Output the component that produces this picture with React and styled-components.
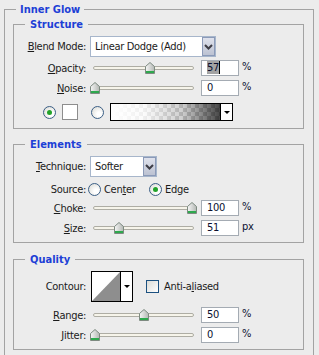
import React from 'react'
import styled, { createGlobalStyle } from 'styled-components'

const GlobalStyle = createGlobalStyle`
  body {
    margin: 0;
    background: #ececec;
    font-family: 'DejaVu Sans Condensed', 'Liberation Sans', sans-serif;
    font-size: 11px;
    letter-spacing: -0.3px;
    color: #1b1b1b;
  }
`

const Panel = styled.fieldset`
  box-sizing: border-box;
  width: 310px;
  min-inline-size: 0;
  margin: 3px 0 0 4px;
  padding: 2px 9px 8px 8px;
  border: 1px solid #a3a3a3;
`

const Legend = styled.legend`
  margin-left: ${(p) => p.$offset}px;
  padding: 0 ${(p) => p.$pad}px;
  line-height: 13px;
  font-weight: bold;
  letter-spacing: 0;
  color: #1d3fd6;
`

const Section = styled.fieldset`
  box-sizing: border-box;
  width: 291px;
  min-inline-size: 0;
  margin: ${(p) => p.$top}px 0 0;
  padding: 5px 0 ${(p) => p.$bottom}px 0;
  border: 1px solid #a3a3a3;
`

const Row = styled.div`
  display: flex;
  align-items: center;
  height: ${(p) => p.$h || 18}px;
  margin-top: ${(p) => p.$mt || 0}px;
  padding-left: ${(p) => p.$indent || 0}px;
`

const Label = styled.span`
  width: 72px;
  flex-shrink: 0;
  text-align: right;
  white-space: nowrap;
`

const Key = styled.u`
  text-decoration: underline;
`

const SelectBox = styled.div`
  box-sizing: border-box;
  width: ${(p) => p.$w}px;
  height: 21px;
  margin-left: 4px;
  display: flex;
  align-items: center;
  border: 1px solid #a7b6cb;
  background: #fff;
  padding-left: 4px;
`

const SelectText = styled.span`
  flex: 1;
  white-space: nowrap;
`

const SelectButton = styled.div`
  box-sizing: border-box;
  width: 13px;
  height: 19px;
  border: 1px solid #8b9ab8;
  background: linear-gradient(#dfe2ec, #bcc2d2);
  display: flex;
  align-items: center;
  justify-content: center;
`

const Slider = styled.div`
  position: relative;
  box-sizing: border-box;
  width: 107px;
  height: 18px;
  margin-left: 4px;
  flex-shrink: 0;
  display: flex;
  align-items: center;
  padding: 0 3px;
`

const Track = styled.div`
  flex: 1;
  height: 2px;
  border: 1px solid #aeada4;
  border-radius: 3px;
  background: #f6f4ea;
`

const Thumb = styled.svg`
  position: absolute;
  top: 3px;
`

const NumBox = styled.div`
  box-sizing: border-box;
  width: 38px;
  height: 16px;
  margin-left: 4px;
  flex-shrink: 0;
  border: 1px solid #a4abb3;
  background: #fff;
  padding-left: 5px;
  line-height: 14px;
  color: #0b1030;
`

const Selected = styled.span`
  background: #a3a3a3;
  border-right: 1px solid #000;
`

const Unit = styled.span`
  margin-left: 3px;
  margin-top: -3px;
  color: #0b1030;
`

const Radio = styled.span`
  box-sizing: border-box;
  width: 13px;
  height: 13px;
  flex-shrink: 0;
  margin-left: ${(p) => p.$ml || 0}px;
  border-radius: 50%;
  border: 1px solid #3b5f86;
  background: radial-gradient(circle at 65% 65%, #fff 20%, #dcdcd6 90%);
  display: flex;
  align-items: center;
  justify-content: center;

  &::after {
    content: '';
    display: ${(p) => (p.$on ? 'block' : 'none')};
    width: 5px;
    height: 5px;
    border-radius: 50%;
    background: #22a32a;
  }
`

const Choice = styled.span`
  display: flex;
  align-items: center;
  gap: 3px;
  width: ${(p) => p.$w || 'auto'};
  margin-left: ${(p) => p.$ml || 0}px;
`

const Swatch = styled.span`
  box-sizing: border-box;
  width: 16px;
  height: 16px;
  margin-left: 6px;
  border: 1px solid #8d8d8d;
  background: #fff;
`

const GradientBox = styled.div`
  box-sizing: border-box;
  width: 123px;
  height: 18px;
  margin-left: 6px;
  display: flex;
  border: 1px solid #000;
`

const GradientFill = styled.div`
  flex: 1;
  background:
    linear-gradient(to right, #fff 0%, rgba(250, 250, 250, 0.75) 30%, rgba(120, 120, 120, 0.35) 65%, rgba(0, 0, 0, 0.72) 100%),
    repeating-conic-gradient(#cfcfcf 0% 25%, #fff 0% 50%) 0 0 / 8px 8px;
`

const DropPart = styled.div`
  box-sizing: border-box;
  width: 12px;
  border-left: 1px solid #000;
  background: #fff;
  display: flex;
  align-items: center;
  justify-content: center;
`

const Caret = styled.span`
  width: 0;
  height: 0;
  border-left: 3px solid transparent;
  border-right: 3px solid transparent;
  border-top: 3px solid #000;
`

const ContourBox = styled.div`
  box-sizing: border-box;
  width: 42px;
  height: 31px;
  margin-left: 5px;
  display: flex;
  border: 1px solid #000;
  background: #fff;
`

const Check = styled.span`
  box-sizing: border-box;
  width: 13px;
  height: 13px;
  margin-left: 13px;
  border: 1px solid #1c5180;
  background: linear-gradient(135deg, #dcdcd7, #fff);
`

const CheckText = styled.span`
  margin-left: 5px;
`

const Chevron = () => (
  <svg width="9" height="6" viewBox="0 0 9 6">
    <polyline points="1,1 4.5,4.5 8,1" fill="none" stroke="#3d3d46" strokeWidth="2" />
  </svg>
)

const SliderControl = ({ value }) => (
  <Slider>
    <Track />
    <Thumb width="10" height="12" viewBox="0 0 10 12" style={{ left: Math.round(value * 97) }}>
      <defs>
        <linearGradient id="thumbFill" x1="0" x2="1">
          <stop offset="0" stopColor="#f6f6f6" />
          <stop offset="1" stopColor="#b4b8b4" />
        </linearGradient>
      </defs>
      <path d="M5 0.5 L9.5 4.5 V11.5 H0.5 V4.5 Z" fill="url(#thumbFill)" stroke="#7d8a80" />
      <rect x="1" y="9" width="8" height="2" fill="#2ea94e" />
    </Thumb>
  </Slider>
)

const SliderRow = ({ label, value, number, unit, mt, selected }) => (
  <Row $mt={mt}>
    <Label>{label}</Label>
    <SliderControl value={value} />
    <NumBox>{selected ? <Selected>{number}</Selected> : number}</NumBox>
    <Unit>{unit}</Unit>
  </Row>
)

export default function App() {
  return (
    <>
      <GlobalStyle />
      <Panel>
        <Legend $offset={3} $pad={4}>Inner Glow</Legend>

        <Section $top={0} $bottom={7}>
          <Legend $offset={11} $pad={5}>Structure</Legend>
          <Row $h={21}>
            <Label><Key>B</Key>lend Mode:</Label>
            <SelectBox $w={126}>
              <SelectText>Linear Dodge (Add)</SelectText>
              <SelectButton><Chevron /></SelectButton>
            </SelectBox>
          </Row>
          <SliderRow mt={2} label={<><Key>O</Key>pacity:</>} value={0.57} number="57" unit="%" selected />
          <SliderRow mt={2} label={<><Key>N</Key>oise:</>} value={0} number="0" unit="%" />
          <Row $mt={6} $indent={29}>
            <Radio $on />
            <Swatch />
            <Radio $ml={13} />
            <GradientBox>
              <GradientFill />
              <DropPart><Caret /></DropPart>
            </GradientBox>
          </Row>
        </Section>

        <Section $top={9} $bottom={5}>
          <Legend $offset={11} $pad={5}>Elements</Legend>
          <Row $h={21}>
            <Label><Key>T</Key>echnique:</Label>
            <SelectBox $w={67}>
              <SelectText>Softer</SelectText>
              <SelectButton><Chevron /></SelectButton>
            </SelectBox>
          </Row>
          <Row $mt={3}>
            <Label>Source:</Label>
            <Choice $ml={2} $w="61px">
              <Radio />
              <span>Cen<Key>t</Key>er</span>
            </Choice>
            <Choice>
              <Radio $on />
              <span>Ed<Key>g</Key>e</span>
            </Choice>
          </Row>
          <SliderRow mt={1} label={<><Key>C</Key>hoke:</>} value={1} number="100" unit="%" />
          <SliderRow mt={2} label={<><Key>S</Key>ize:</>} value={0.25} number="51" unit="px" />
        </Section>

        <Section $top={10} $bottom={5}>
          <Legend $offset={11} $pad={5}>Quality</Legend>
          <Row $h={31}>
            <Label>Contour:</Label>
            <ContourBox>
              <svg width="28" height="29" viewBox="0 0 28 29">
                <polygon points="0,29 28,0 28,29" fill="#8e8e8e" />
              </svg>
              <DropPart><Caret /></DropPart>
            </ContourBox>
            <Check />
            <CheckText>Anti-a<Key>l</Key>iased</CheckText>
          </Row>
          <SliderRow mt={4} label={<><Key>R</Key>ange:</>} value={0.5} number="50" unit="%" />
          <SliderRow mt={2} label={<><Key>J</Key>itter:</>} value={0} number="0" unit="%" />
        </Section>
      </Panel>
    </>
  )
}
